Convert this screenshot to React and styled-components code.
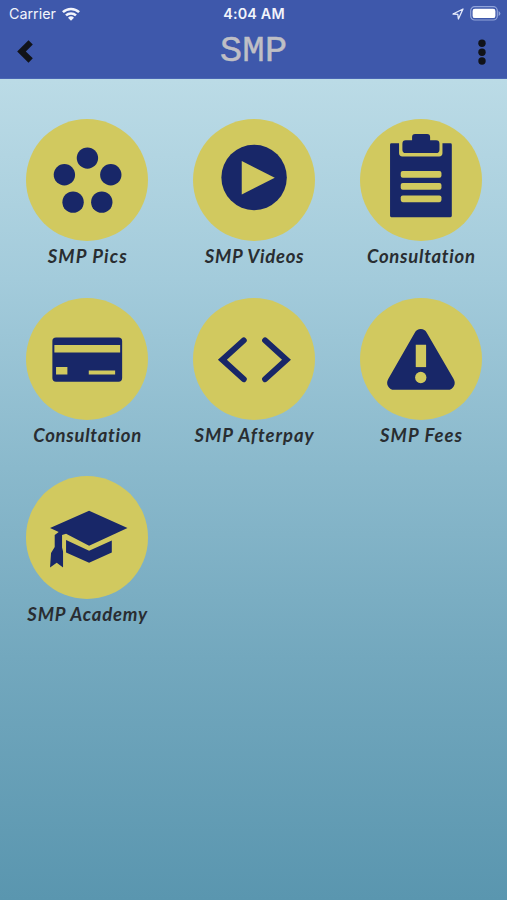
import React from 'react';
import styled, { createGlobalStyle } from 'styled-components';

const NAVY = '#182768';
const GOLD = '#d1c95f';

const GlobalStyle = createGlobalStyle`
  body { margin: 0; }
  *, *::before, *::after { box-sizing: border-box; }
`;

const Screen = styled.main`
  width: 507px;
  height: 900px;
  overflow: hidden;
  display: flex;
  flex-direction: column;
  background: linear-gradient(180deg, #bfdfe8 0%, #bbdbe6 9%, #a3cbdb 31%, #8ab9cc 52%, #73a8be 73%, #5a96af 100%);
`;

const Header = styled.header`
  height: 79px;
  flex: none;
  background: #3e58ab;
  border-bottom: 1px solid #4a66b4;
`;

const StatusBar = styled.div`
  height: 27px;
  padding: 0 6px 0 9px;
  display: grid;
  grid-template-columns: 1fr auto 1fr;
  align-items: center;
  color: #f2f4fb;
  font-family: Inter, 'Liberation Sans', sans-serif;
  font-size: 14.3px;
  line-height: 27px;
`;

const StatusGroup = styled.div`
  display: flex;
  align-items: center;
  justify-content: ${(p) => (p.$end ? 'flex-end' : 'flex-start')};
  gap: 6px;
`;

const Clock = styled.time`
  font-weight: 600;
  font-size: 14.3px;
  letter-spacing: 0.2px;
  margin-right: 2px;
`;

const NavBar = styled.nav`
  height: 51px;
  padding: 0 21px 0 17px;
  display: grid;
  grid-template-columns: 1fr auto 1fr;
  align-items: start;
`;

const NavButton = styled.button`
  border: 0;
  padding: 0;
  margin-top: ${(p) => p.$top}px;
  background: none;
  display: flex;
  justify-self: ${(p) => (p.$end ? 'end' : 'start')};
`;

const Title = styled.h1`
  margin: 1px 0 0 4px;
  font: 400 37.5px/46px 'Liberation Mono', monospace;
  color: #bfbfc5;
  -webkit-text-stroke: 0.4px #bfbfc5;
`;

const Grid = styled.section`
  display: grid;
  grid-template-columns: repeat(3, 166.9px);
  grid-auto-rows: 178.8px;
  padding: 39.8px 0 0 3.8px;
`;

const Tile = styled.a`
  display: flex;
  flex-direction: column;
  align-items: center;
`;

const Disc = styled.div`
  width: 122.2px;
  height: 122.2px;
  border-radius: 50%;
  background: ${GOLD};
  svg { display: block; width: 100%; height: 100%; }
`;

const Label = styled.span`
  margin-top: 3px;
  font: italic 700 18.5px/24px Lato, sans-serif;
  letter-spacing: ${(p) => p.$tracking}px;
  margin-right: ${(p) => -p.$tracking}px;
  color: #292d31;
  white-space: nowrap;
`;

const Wifi = () => (
  <svg width="18" height="14" viewBox="0 0 18 14" fill="none" stroke="#f2f4fb" strokeWidth="2.5">
    <path d="M.9 5.2a11.6 11.6 0 0 1 16.2 0M4 8.4a7.2 7.2 0 0 1 10 0" />
    <path d="M9 13.8 6 10.7a4.3 4.3 0 0 1 6 0z" fill="#f2f4fb" stroke="none" />
  </svg>
);

const LocationArrow = () => (
  <svg width="12" height="12" viewBox="0 0 12 12" fill="none" stroke="#e5eafa" strokeWidth="1.3" strokeLinejoin="round">
    <path d="M1 6 11 1 6.4 11 5.8 6.4z" />
  </svg>
);

const Battery = () => (
  <svg width="31" height="15" viewBox="0 0 31 15">
    <rect x=".7" y=".7" width="26.6" height="13.3" rx="4" fill="none" stroke="#91a4da" strokeWidth="1.2" />
    <rect x="2.6" y="2.7" width="22.8" height="9.4" rx="2.2" fill="#fff" />
    <path d="M28.6 5v5q1.8-1 1.8-2.500T28.600 5" fill="#91a4da" />
  </svg>
);

const BackIcon = () => (
  <svg width="16" height="23" viewBox="0 0 16 23">
    <path d="M11.500.2 15.800 4.400 8.800 11.400 15.800 18.300 11.500 22.700.2 11.400z" fill="#111319" />
  </svg>
);

const MoreIcon = () => (
  <svg width="8" height="26" viewBox="0 0 8 26" fill="#111319">
    <circle cx="4" cy="4.3" r="3.7" />
    <circle cx="4" cy="13.2" r="3.7" />
    <circle cx="4" cy="22" r="3.7" />
  </svg>
);

const Glyph = ({ box, children }) => (
  <svg viewBox={`${box} 366 366`} fill={NAVY}>{children}</svg>
);

const PicsIcon = () => (
  <Glyph box="48 26">
    <circle cx="232" cy="143" r="32" />
    <circle cx="163" cy="193" r="32" />
    <circle cx="302" cy="193" r="32" />
    <circle cx="189" cy="275" r="32" />
    <circle cx="275" cy="275" r="32" />
  </Glyph>
);

const PlayIcon = () => (
  <Glyph box="38 26">
    <circle cx="221" cy="201" r="98" />
    <path d="M184 152 283 202 184 252z" fill={GOLD} />
  </Glyph>
);

const ClipboardIcon = () => (
  <Glyph box="38 26">
    <path d="M132 99h23v29q0 10 10 10h110q10 0 10-10V99h24q4 0 4 4v213q0 4-4 4H132q-4 0-4-4V103q0-4 4-4z" />
    <path d="M175 90h19V80q0-9 9-9h36q9 0 9 9v10h18q10 0 10 10v18q0 10-10 10h-91q-10 0-10-10v-18q0-10 10-10z" />
    <g fill={GOLD}>
      <rect x="160" y="182" width="122" height="20" rx="6" />
      <rect x="160" y="218" width="122" height="20" rx="6" />
      <rect x="160" y="255" width="122" height="20" rx="6" />
    </g>
  </Glyph>
);

const CardIcon = () => (
  <Glyph box="48 23">
    <rect x="127" y="141" width="209" height="133" rx="11" />
    <path d="M133 164h197v22H133zM138 230h34v22H138zM236 240h79v12H236z" fill={GOLD} />
  </Glyph>
);

const CodeIcon = () => (
  <Glyph box="38 23">
    <path d="M190 150 126 208 190 266M254 150 318 208 254 266" fill="none" stroke={NAVY} strokeWidth="18" strokeLinecap="round" />
  </Glyph>
);

const WarningIcon = () => (
  <Glyph box="38 23">
    <path d="M202 127q6-11 18-11t18 11l80 138q7 13 1 22-6 11-18 11H140q-12 0-18-11-6-9 1-22z" />
    <path d="M205 163h31v67h-31z" fill={GOLD} />
    <circle cx="220" cy="261" r="17" fill={GOLD} />
  </Glyph>
);

const AcademyIcon = () => (
  <Glyph box="48 19">
    <path d="M237 123 352 175 237 228 168 192 156 196 156 233 159 245 159 293 140 279 120 293 123 250 134 232 134 196 146 187 120 175z" />
    <path d="M168 211 237 243 305 212V248L237 279 168 248z" />
  </Glyph>
);

const ITEMS = [
  { label: 'SMP Pics', Icon: PicsIcon, tracking: 1.1 },
  { label: 'SMP Videos', Icon: PlayIcon, tracking: 0.75 },
  { label: 'Consultation', Icon: ClipboardIcon, tracking: 0.72 },
  { label: 'Consultation', Icon: CardIcon, tracking: 0.72 },
  { label: 'SMP Afterpay', Icon: CodeIcon, tracking: 1 },
  { label: 'SMP Fees', Icon: WarningIcon, tracking: 1.05 },
  { label: 'SMP Academy', Icon: AcademyIcon, tracking: 0.8 },
];

export default function App() {
  return (
    <>
      <GlobalStyle />
      <Screen>
        <Header>
          <StatusBar>
            <StatusGroup>Carrier<Wifi /></StatusGroup>
            <Clock>4:04 AM</Clock>
            <StatusGroup $end><LocationArrow /><Battery /></StatusGroup>
          </StatusBar>
          <NavBar>
            <NavButton $top={13} aria-label="Back"><BackIcon /></NavButton>
            <Title>SMP</Title>
            <NavButton $top={12} $end aria-label="More"><MoreIcon /></NavButton>
          </NavBar>
        </Header>
        <Grid>
          {ITEMS.map(({ label, Icon, tracking }, i) => (
            <Tile key={i}>
              <Disc><Icon /></Disc>
              <Label $tracking={tracking}>{label}</Label>
            </Tile>
          ))}
        </Grid>
      </Screen>
    </>
  );
}
